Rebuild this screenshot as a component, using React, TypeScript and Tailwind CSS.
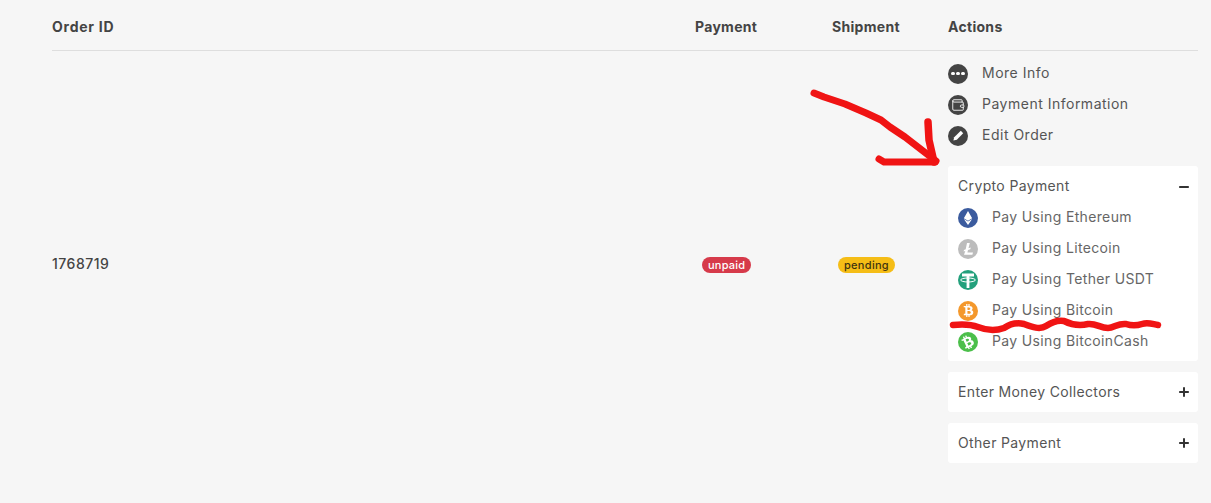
import { ReactNode } from 'react';
import { FaBtc, FaEthereum } from 'react-icons/fa';
import { Minus, Plus, Wallet } from 'lucide-react';

const font = "font-['Inter','Liberation_Sans',sans-serif]";

function Circle({ color, children }: { color: string; children: ReactNode }) {
    return (
        <span className={`w-5 h-5 rounded-full flex items-center justify-center shrink-0 text-white ${color}`}>
            {children}
        </span>
    );
}

function ActionRow({ icon, label }: { icon: ReactNode; label: string }) {
    return (
        <div className="h-[31px] flex items-center gap-[14px] text-[#555] text-[14px] tracking-[0.5px]">
            {icon}
            <span className="pb-[2px]">{label}</span>
        </div>
    );
}

function CoinRow({ icon, label }: { icon: ReactNode; label: string }) {
    return (
        <div className="h-[31px] flex items-center gap-[14px] text-[#666] text-[14px] tracking-[0.35px]">
            {icon}
            <span className="pb-[2px]">{label}</span>
        </div>
    );
}

function Collapsed({ label }: { label: string }) {
    return (
        <div className="h-10 bg-white rounded-[3px] px-[10px] flex items-center justify-between text-[#555] text-[14px] tracking-[0.35px]">
            <span className="pb-[2px]">{label}</span>
            <Plus size={14} strokeWidth={3.4} className="text-[#333] -mr-[3px]" />
        </div>
    );
}

export default function App() {
    return (
        <div className={`relative w-[1211px] h-[503px] overflow-hidden bg-[#f6f6f6] pl-[52px] pr-[13px] ${font}`}>
            {/* Table head */}
            <div className="h-[51px] grid grid-cols-[643px_137px_116px_1fr] items-center border-b border-[#dedede] text-[14px] font-bold text-[#444] tracking-[0.3px] pt-[2px]">
                <div className="tracking-[0.75px]">Order ID</div>
                <div>Payment</div>
                <div>Shipment</div>
                <div>Actions</div>
            </div>

            {/* Order row */}
            <div className="grid grid-cols-[643px_137px_116px_1fr] items-center pt-[7px]">
                <div className="pt-[5px] text-[14px] font-medium text-[#444] tracking-[0.5px]">1768719</div>
                <div className="pl-[7px] pt-[4px]">
                    <span className="inline-flex items-center h-4 px-[6px] rounded-full bg-[#d63a4a] text-white text-[11px] font-medium tracking-[0.2px]">
                        unpaid
                    </span>
                </div>
                <div className="pl-[6px] pt-[4px]">
                    <span className="inline-flex items-center h-4 px-[6px] rounded-full bg-[#f5bd16] text-[#3f3410] text-[11px] font-medium tracking-[0.3px]">
                        pending
                    </span>
                </div>
                <div>
                    <ActionRow
                        label="More Info"
                        icon={
                            <Circle color="bg-[#444]">
                                <span className="flex gap-[1.5px]">
                                    <i className="w-[3.5px] h-[3.5px] rounded-full bg-white" />
                                    <i className="w-[3.5px] h-[3.5px] rounded-full bg-white" />
                                    <i className="w-[3.5px] h-[3.5px] rounded-full bg-white" />
                                </span>
                            </Circle>
                        }
                    />
                    <ActionRow
                        label="Payment Information"
                        icon={
                            <Circle color="bg-[#444]">
                                <Wallet size={14} strokeWidth={1.5} />
                            </Circle>
                        }
                    />
                    <ActionRow
                        label="Edit Order"
                        icon={
                            <Circle color="bg-[#444]">
                                <svg viewBox="0 0 20 20" className="w-5 h-5">
                                    <path d="M5.4 14.6 L6.2 11.2 L12.8 4.8 L15.2 7.2 L8.8 13.8 Z" fill="white" />
                                </svg>
                            </Circle>
                        }
                    />

                    <div className="mt-[15px] flex flex-col gap-[11px]">
                        <div className="bg-white rounded-[3px] px-[10px] pt-[5px] pb-[4px]">
                            <div className="h-[31px] flex items-center justify-between text-[#555] text-[14px] tracking-[0.35px]">
                                <span className="pb-[2px]">Crypto Payment</span>
                                <Minus size={14} strokeWidth={3.4} className="text-[#333] -mr-[3px]" />
                            </div>
                            <CoinRow
                                label="Pay Using Ethereum"
                                icon={
                                    <Circle color="bg-[#3b5b9e]">
                                        <FaEthereum size={14} />
                                    </Circle>
                                }
                            />
                            <CoinRow
                                label="Pay Using Litecoin"
                                icon={
                                    <Circle color="bg-[#bcbcbc]">
                                        <svg viewBox="0 0 20 20" className="w-5 h-5">
                                            <path d="M9 4 H11.8 L10.5 9.2 L12.8 8.4 L12.3 10.2 L10 11 L9.4 13.4 H15 L14.4 15.8 H6 L7.3 11.9 L5.6 12.5 L6 10.9 L7.7 10.3 Z" fill="white" />
                                        </svg>
                                    </Circle>
                                }
                            />
                            <CoinRow
                                label="Pay Using Tether USDT"
                                icon={
                                    <Circle color="bg-[#23a07c]">
                                        <svg viewBox="0 0 20 20" className="w-5 h-5">
                                            <path d="M4 3.6 H16 V6.6 H11.4 V18 H8.6 V6.6 H4 Z" fill="white" />
                                            <ellipse cx="10" cy="10" rx="7.4" ry="2" fill="none" stroke="white" strokeWidth="1" />
                                        </svg>
                                    </Circle>
                                }
                            />
                            <CoinRow
                                label="Pay Using Bitcoin"
                                icon={
                                    <Circle color="bg-[#f4982c]">
                                        <FaBtc size={13} />
                                    </Circle>
                                }
                            />
                            <CoinRow
                                label="Pay Using BitcoinCash"
                                icon={
                                    <Circle color="bg-[#4bbf4a]">
                                        <FaBtc size={14} className="-rotate-[25deg]" />
                                    </Circle>
                                }
                            />
                        </div>
                        <Collapsed label="Enter Money Collectors" />
                        <Collapsed label="Other Payment" />
                    </div>
                </div>
            </div>

            {/* Red marker annotations drawn over the page */}
            <svg viewBox="0 0 1211 503" className="absolute inset-0 w-[1211px] h-[503px] pointer-events-none">
                <g fill="none" stroke="#f01414" strokeLinecap="round" strokeLinejoin="round">
                    <path d="M814 93 L824 97 L845 104 L866 113 L881 120 L890 127 L905 137 L936 161" strokeWidth="7" />
                    <path d="M928 122 L929 140 L934 162" strokeWidth="7.5" />
                    <path d="M879 159 L884 162 L935 162" strokeWidth="7" />
                    <path d="M953 325 C962 324 970 324 978 327 C988 331 996 331 1004 328 C1010 324 1016 322 1024 324 C1032 327 1040 330 1046 326 C1052 322 1058 320 1064 321 C1072 325 1080 326 1088 324 C1096 323 1100 328 1108 328 C1114 328 1118 323 1126 324 C1132 326 1136 326 1142 324 C1148 322 1152 324 1158 325" strokeWidth="6.5" />
                </g>
            </svg>
        </div>
    );
}
